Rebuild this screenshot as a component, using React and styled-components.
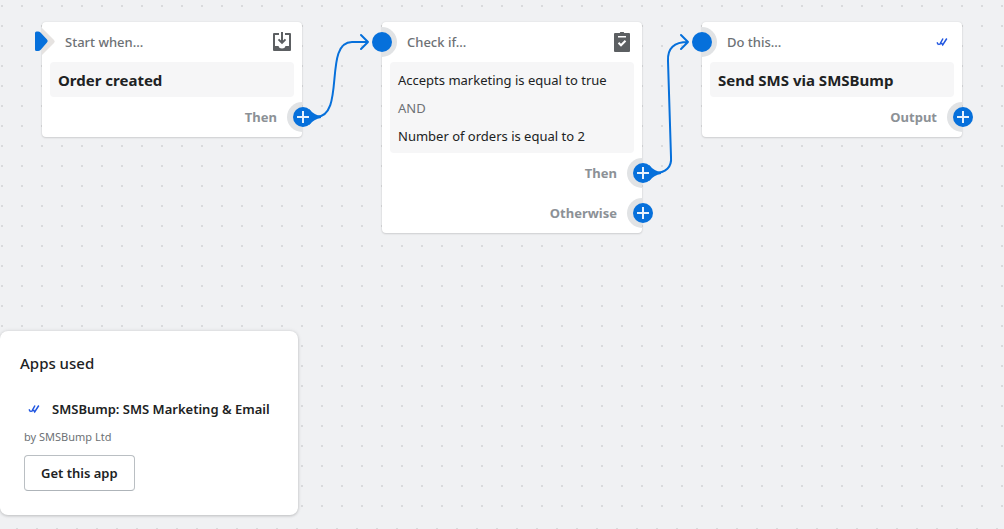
import React from "react";
import styled, { createGlobalStyle } from "styled-components";

const BLUE = "#0670db";

const GlobalStyle = createGlobalStyle`
  *, *::before, *::after { box-sizing: border-box; }
  body {
    margin: 0;
    background: #f0f1f3;
    font-family: "Noto Sans", "Open Sans", sans-serif;
    font-size: 13px;
    line-height: 20px;
    color: #202223;
  }
  h2, h3, p { margin: 0; padding: 0; }
`;

const Page = styled.main`
  min-height: 100vh;
  display: flex;
  flex-direction: column;
  overflow: hidden;
`;

const DotGrid = styled.div`
  background-image: conic-gradient(from 270deg at 2px 2px, #d9dadc 90deg, transparent 0);
  background-size: 20px 20px;
`;

const Canvas = styled(DotGrid)`
  position: relative;
  flex: 1;
  display: flex;
  flex-direction: column;
  justify-content: flex-end;
  padding-top: 250px;
  background-position: 1px 5px;
`;

const CanvasEdge = styled(DotGrid)`
  height: 14px;
  background-position: 16px 13px;
`;

const Wires = styled.svg`
  position: absolute;
  top: 0;
  left: 0;
  pointer-events: none;
`;

const Node = styled.article`
  position: absolute;
  left: ${(p) => p.$x}px;
  top: ${(p) => p.$y}px;
  width: 260px;
  background: #fff;
  border-radius: 4px;
  box-shadow: 0 0 2px rgba(23, 24, 24, 0.1), 0 1px 2px rgba(0, 0, 0, 0.12);
`;

const NodeHeader = styled.header`
  display: flex;
  align-items: center;
  justify-content: space-between;
  height: 40px;
  padding: 0 10px 0 ${(p) => (p.$trigger ? 23 : 25)}px;
  color: #6d7175;
`;

const NodeTitle = styled.h3`
  font-size: 13px;
  font-weight: 500;
`;

const NodeBody = styled.div`
  margin: 0 8px;
  padding: 8px 8px 7px;
  display: grid;
  gap: 8px;
  background: #f6f6f7;
  border-radius: 4px;
`;

const Strong = styled.p`
  font-size: 15px;
  font-weight: 700;
`;

const Joiner = styled.p`
  color: #6d7175;
`;

const Outputs = styled.footer`
  display: grid;
`;

const OutputRow = styled.div`
  display: flex;
  align-items: center;
  justify-content: flex-end;
  height: 40px;
  padding-right: 25px;
  font-weight: 700;
  color: #8c9196;
`;

const Ports = styled.svg`
  position: absolute;
  overflow: visible;
  top: 0;
  left: 0;
  pointer-events: none;
`;

const AddButton = styled.button`
  position: absolute;
  left: 250px;
  top: ${(p) => p.$y - 10}px;
  width: 21px;
  height: 20px;
  padding: 0;
  border: 0;
  border-radius: 50%;
  background: none;
  cursor: pointer;
  svg { display: block; overflow: visible; }
`;

const AppsPanel = styled.aside`
  position: relative;
  z-index: 1;
  align-self: flex-start;
  width: 298px;
  padding: 20px;
  background: #fff;
  border-radius: 8px;
  box-shadow: 0 0 4px rgba(23, 24, 24, 0.1), 0 1px 3px rgba(0, 0, 0, 0.16);
`;

const PanelTitle = styled.h2`
  margin-top: 2px;
  font-size: 15px;
  font-weight: 500;
`;

const AppEntry = styled.div`
  display: grid;
  justify-items: start;
  padding: 26px 4px 4px;
`;

const AppName = styled.div`
  display: flex;
  align-items: center;
  gap: 8px;
  font-weight: 600;
  white-space: nowrap;
`;

const Vendor = styled.p`
  margin-top: 8px;
  font-size: 11px;
  color: #6d7175;
`;

const Button = styled.button`
  margin-top: 8px;
  height: 36px;
  padding: 0 16px;
  border: 1px solid #babfc3;
  border-bottom-color: #aeb4b9;
  border-radius: 4px;
  background: #fff;
  color: #202223;
  font: inherit;
  font-weight: 600;
  cursor: pointer;
`;

function InboxIcon() {
  return (
    <svg width="20" height="20" viewBox="0 0 20 20" fill="#5c5f62" aria-hidden="true">
      <path d="M2 1h5v2H3v11h3.5c.4 1.700 1.700 2.500 3.500 2.500s3.100-.8 3.500-2.500H17V3h-4V1h5a1 1 0 0 1 1 1v16a1 1 0 0 1-1 1H2a1 1 0 0 1-1-1V2a1 1 0 0 1 1-1z" />
      <path d="M9 0h2v8.400l1.800-1.700 1.400 1.400L10 12.200 5.800 8.100l1.400-1.400L9 8.400z" />
    </svg>
  );
}

function ClipboardIcon() {
  return (
    <svg width="20" height="20" viewBox="0 0 20 20" aria-hidden="true">
      <path fill="#5c5f62" d="M3 1h4.500a.5.5 0 0 0 .5-.5.500.5 0 0 1 .5-.5h3a.5.5 0 0 1 .5.5.500.5 0 0 0 .5.5H17a1 1 0 0 1 1 1v17a1 1 0 0 1-1 1H3a1 1 0 0 1-1-1V2a1 1 0 0 1 1-1z" />
      <path fill="#fff" d="M6 4h8v1.500H6z" />
      <path fill="none" stroke="#fff" strokeWidth="2" d="M6.500 10.800l2.500 2.500 4.500-4.500" />
    </svg>
  );
}

function BumpIcon() {
  return (
    <svg width="20" height="20" viewBox="0 0 20 20" fill="none" stroke="#1f55e0" strokeWidth="1.500" aria-hidden="true">
      <path d="M5 10.300l1.600 2.500M11 6.500L7.500 12.800M9.500 11l1.200 1.800L14.800 6.500" />
    </svg>
  );
}

function InPort() {
  return (
    <Ports width="20" height="40" aria-hidden="true">
      <path d="M0 5a15 15 0 0 1 0 30z" fill="#e1e3e5" />
      <circle cx="0" cy="20" r="10" fill={BLUE} />
    </Ports>
  );
}

function TriggerPort() {
  return (
    <Ports width="20" height="40" aria-hidden="true">
      <path d="M0 6L12 18q1.500 1.500 0 3L0 33z" fill="#e6e3e1" />
      <path d="M-7 11q0-1.500 1.500-1.500h1.500q1.500 0 2.500 1L5 17.500q1.500 1.500 0 3L-1.500 28q-1 1-2.500 1h-1.500q-1.500 0-1.500-1.500z" fill={BLUE} />
    </Ports>
  );
}

function Output({ label, y, linked }) {
  return (
    <>
      <OutputRow>{label}</OutputRow>
      <AddButton $y={y} aria-label={`Add step after ${label}`}>
        <svg width="21" height="20" aria-hidden="true">
          <path d="M10-5a15 15 0 0 0 0 30z" fill="#e1e3e5" />
          {linked && <path d="M17 2Q22 8 29 9v2q-7 1-12 7z" fill={BLUE} />}
          <circle cx="11" cy="10" r="10" fill={BLUE} />
          <path d="M5 10h12M11 4v12" stroke="#e8f2fc" strokeWidth="2" />
        </svg>
      </AddButton>
    </>
  );
}

export default function App() {
  return (
    <>
      <GlobalStyle />
      <Page>
        <Canvas>
          <Node $x={42} $y={22}>
            <NodeHeader $trigger>
              <NodeTitle>Start when...</NodeTitle>
              <InboxIcon />
            </NodeHeader>
            <TriggerPort />
            <NodeBody>
              <Strong>Order created</Strong>
            </NodeBody>
            <Outputs>
              <Output label="Then" y={95} linked />
            </Outputs>
          </Node>

          <Node $x={382} $y={22}>
            <NodeHeader>
              <NodeTitle>Check if...</NodeTitle>
              <ClipboardIcon />
            </NodeHeader>
            <InPort />
            <NodeBody>
              <p>Accepts marketing is equal to true</p>
              <Joiner>AND</Joiner>
              <p>Number of orders is equal to 2</p>
            </NodeBody>
            <Outputs>
              <Output label="Then" y={151} linked />
              <Output label="Otherwise" y={191} />
            </Outputs>
          </Node>

          <Node $x={702} $y={22}>
            <NodeHeader>
              <NodeTitle>Do this...</NodeTitle>
              <BumpIcon />
            </NodeHeader>
            <InPort />
            <NodeBody>
              <Strong>Send SMS via SMSBump</Strong>
            </NodeBody>
            <Outputs>
              <Output label="Output" y={95} />
            </Outputs>
          </Node>

          <Wires width="1004" height="260" fill="none" stroke={BLUE} strokeWidth="2" strokeLinecap="round" strokeLinejoin="round" aria-hidden="true">
            <path d="M312 117h4C346 117 323 42 352 42H368M361 35l7 7-7 7" />
            <path d="M652 173h2C666 173 672 167 671 157L668 61Q667 42 688 42M681 35l7 7-7 7" />
          </Wires>

          <AppsPanel>
            <PanelTitle>Apps used</PanelTitle>
            <AppEntry>
              <AppName>
                <BumpIcon />
                SMSBump: SMS Marketing &amp; Email
              </AppName>
              <Vendor>by SMSBump Ltd</Vendor>
              <Button type="button">Get this app</Button>
            </AppEntry>
          </AppsPanel>
        </Canvas>
        <CanvasEdge />
      </Page>
    </>
  );
}
